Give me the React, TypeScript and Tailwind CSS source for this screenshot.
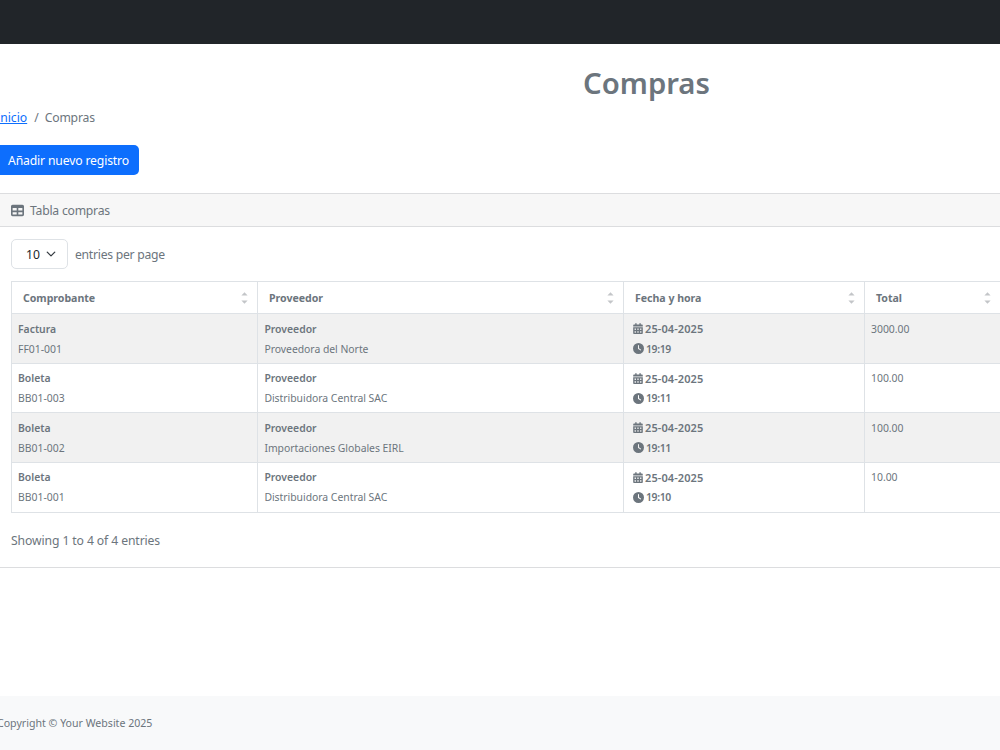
import { FaTable, FaCalendarDays, FaClock } from "react-icons/fa6";

const columns = [
  { name: "Comprobante", cls: "w-[246px]" },
  { name: "Proveedor", cls: "w-[366px]" },
  { name: "Fecha y hora", cls: "w-[241px]" },
  { name: "Total", cls: "w-[136px]" },
];

const rows = [
  { kind: "Factura", code: "FF01-001", supplier: "Proveedora del Norte", time: "19:19", total: "3000.00", cls: "h-[50px] bg-[#f1f1f1] leading-[20px]" },
  { kind: "Boleta", code: "BB01-003", supplier: "Distribuidora Central SAC", time: "19:11", total: "100.00", cls: "h-[49px] leading-[19.6px]" },
  { kind: "Boleta", code: "BB01-002", supplier: "Importaciones Globales EIRL", time: "19:11", total: "100.00", cls: "h-[50px] bg-[#f1f1f1] leading-[20px]" },
  { kind: "Boleta", code: "BB01-001", supplier: "Distribuidora Central SAC", time: "19:10", total: "10.00", cls: "h-[50px] leading-[19.6px]" },
];

const cell = "border-r border-b border-[#dee2e6] pt-[5.2px] whitespace-nowrap";

function SortArrows() {
  return (
    <svg className="h-[12px] w-[7px]" viewBox="0 0 7 12" fill="#c3c5c8">
      <path d="M0.4 3.6 3.5 0.3 6.6 3.6z" />
      <path d="M0.4 8.4 3.5 11.7 6.6 8.4z" />
    </svg>
  );
}

export default function App() {
  return (
    <div className="flex h-[750px] w-[1000px] flex-col overflow-hidden bg-white font-['Noto_Sans','Open_Sans',sans-serif] text-[#6c757d]">
      <header className="h-[44px] shrink-0 bg-[#212529]" />
      <main className="flex h-[652px] shrink-0 flex-col">
        <h1 className="mt-[19px] ml-[583px] h-[40px] text-[29.3px] leading-[40px] font-semibold whitespace-nowrap">Compras</h1>
        <nav className="mt-[5px] ml-[-4px] flex h-[20px] items-center text-[12.2px] leading-[20px] whitespace-nowrap">
          <a className="text-[#0d6efd] underline" href="#">Inicio</a>
          <span className="ml-[7px]">/</span>
          <span className="ml-[6px] tracking-[-0.2px]">Compras</span>
        </nav>
        <button className="mt-[17px] ml-[-5px] h-[30px] w-[143.5px] shrink-0 rounded-[5px] bg-[#0d6efd] pl-[13px] text-left text-[12.2px] leading-[29px] tracking-[-0.15px] whitespace-nowrap text-white">
          Añadir nuevo registro
        </button>
        <section className="mt-[18px] ml-[-5px] h-[375px] w-[1100px] shrink-0 rounded-[5px] border border-[#dcdddf] pl-[15px]">
          <div className="ml-[-15px] flex h-[33px] items-center border-b border-[#dcdddf] bg-[#f7f7f7] pl-[15px] text-[12.2px] whitespace-nowrap">
            <FaTable className="h-[13px] w-[13px]" />
            <span className="ml-[6px] pt-[3px] tracking-[-0.23px]">Tabla compras</span>
          </div>
          <div className="mt-[12px] flex h-[30px] items-center text-[12.2px] whitespace-nowrap">
            <div className="flex h-[30px] w-[57px] items-center rounded-[5px] border border-[#dee2e6] pl-[14px] text-[#212529]">
              <span className="pt-[3px]">10</span>
              <svg className="ml-[6px] h-[10px] w-[10px]" viewBox="0 0 16 16" fill="none" stroke="#343a40" strokeWidth="2" strokeLinecap="round" strokeLinejoin="round">
                <path d="m2 5 6 6 6-6" />
              </svg>
            </div>
            <span className="ml-[7px] pt-[3px] tracking-[-0.27px]">entries per page</span>
          </div>
          <div className="mt-[12px] w-[990px] border-t border-l border-[#dee2e6]">
            <div className="flex h-[32px]">
              {columns.map((c) => (
                <div key={c.name} className={`${c.cls} flex shrink-0 items-center justify-between border-r border-b border-[#dee2e6] pt-[1px] pr-[9px] pl-[11px] text-[10.6px] font-bold whitespace-nowrap`}>
                  <span className="pt-[1px] tracking-[-0.03px]">{c.name}</span>
                  <SortArrows />
                </div>
              ))}
            </div>
            {rows.map((r) => (
              <div key={r.code} className={`${r.cls} flex text-[10.4px]`}>
                <div className={`${cell} w-[246px] shrink-0 pl-[6px]`}>
                  <p className="font-semibold">{r.kind}</p>
                  <p>{r.code}</p>
                </div>
                <div className={`${cell} w-[366px] shrink-0 pl-[6.4px]`}>
                  <p className="font-semibold">Proveedor</p>
                  <p className="tracking-[-0.02px]">{r.supplier}</p>
                </div>
                <div className={`${cell} w-[241px] shrink-0 pl-[9px] font-semibold`}>
                  <p className="flex items-center"><FaCalendarDays className="mr-[2px] h-[11px] w-[10px]" /><span className="text-[11px] leading-[19.6px] tracking-[0.1px]">25-04-2025</span></p>
                  <p className="flex items-center"><FaClock className="mr-[2px] h-[11px] w-[11px]" /><span className="tracking-[-0.35px]">{r.time}</span></p>
                </div>
                <div className={`${cell} w-[136px] shrink-0 pl-[6px]`}>{r.total}</div>
              </div>
            ))}
          </div>
          <p className="mt-[18px] text-[12.2px] leading-[20px] tracking-[-0.11px] whitespace-nowrap">Showing 1 to 4 of 4 entries</p>
        </section>
      </main>
      <footer className="flex h-[54px] items-center bg-[#f8f9fa] pt-[2px] text-[10.6px] whitespace-nowrap">
        <span className="ml-[-3px]">Copyright © Your Website 2025</span>
      </footer>
    </div>
  );
}
